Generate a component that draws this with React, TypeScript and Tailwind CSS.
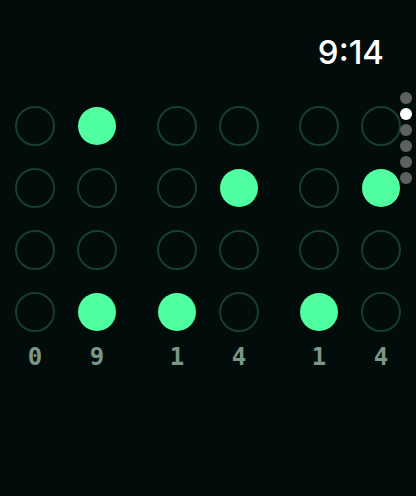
const digits = [0, 9, 1, 4, 1, 4];
const bits = [8, 4, 2, 1];

function Bit({ on }: { on: boolean }) {
  return on ? (
    <div className="w-[40px] h-[40px] flex items-center justify-center">
      <div className="w-[38px] h-[38px] rounded-full bg-[#50ff9f]" />
    </div>
  ) : (
    <div className="w-[40px] h-[40px] rounded-full border-2 border-[#173f2b]" />
  );
}

function Column({ value }: { value: number }) {
  return (
    <div className="flex flex-col items-center">
      <div className="flex flex-col gap-[22px]">
        {bits.map((b) => (
          <Bit key={b} on={(value & b) !== 0} />
        ))}
      </div>
      <div className="mt-[13px] text-[24px] leading-none font-bold text-[#7b9787] font-['DejaVu_Sans_Mono',monospace]">
        {value}
      </div>
    </div>
  );
}

export default function App() {
  return (
    <div className="relative w-[416px] h-[496px] bg-[#020c0a] overflow-hidden">
      {/* Time */}
      <div className="flex justify-end pr-[32px] pt-[36px]">
        <span className="text-[33px] leading-none font-medium text-white font-['Inter',sans-serif]">
          9:14
        </span>
      </div>

      {/* Binary columns */}
      <div className="flex mt-[37px] pl-[15px] gap-[40px]">
        {[0, 2, 4].map((i) => (
          <div key={i} className="flex gap-[22px]">
            <Column value={digits[i]} />
            <Column value={digits[i + 1]} />
          </div>
        ))}
      </div>

      {/* Page indicator */}
      <div className="absolute right-[4px] top-[92px] flex flex-col gap-[4px]">
        {[0, 1, 2, 3, 4, 5].map((i) => (
          <div
            key={i}
            className={
              i === 1
                ? "w-[12px] h-[12px] rounded-full bg-white"
                : "w-[12px] h-[12px] rounded-full bg-[#5f6160]"
            }
          />
        ))}
      </div>
    </div>
  );
}
